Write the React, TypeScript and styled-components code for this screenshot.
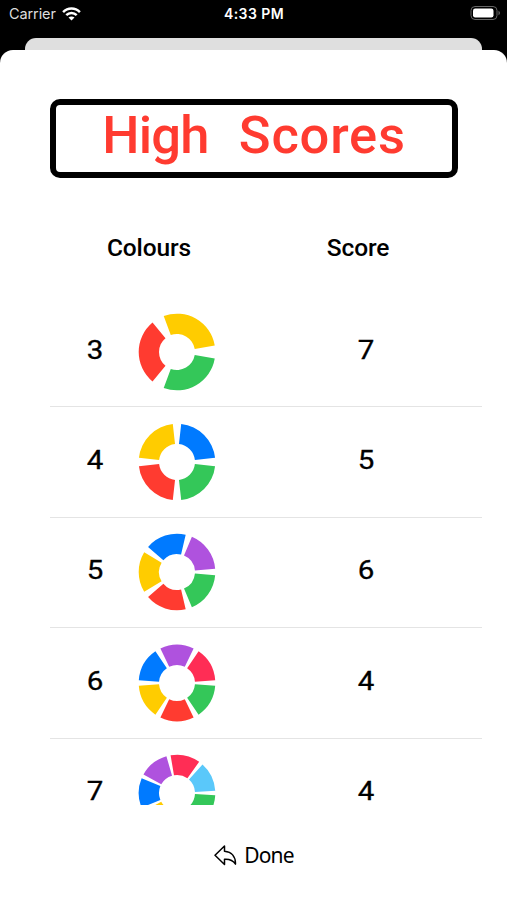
import React from "react";
import styled, { createGlobalStyle } from "styled-components";

const Global = createGlobalStyle`
  *, *::before, *::after { box-sizing: border-box; }
  body { margin: 0; background: #000; overflow: hidden; }
`;

const Screen = styled.div`
  width: 507px;
  height: 900px;
  display: flex;
  flex-direction: column;
  background: #000;
  overflow: hidden;
  font-family: Roboto, sans-serif;
  color: #000;
`;

const StatusBar = styled.header`
  height: 38px;
  flex: none;
  display: grid;
  grid-template-columns: 1fr auto 1fr;
  align-items: start;
  padding: 5px 6px 0 9px;
  color: #fff;
  font: 400 14.5px/18px Inter, sans-serif;
`;

const Carrier = styled.div`
  display: flex;
  align-items: center;
  gap: 6px;
  color: #ddd;
  letter-spacing: -0.1px;
`;

const Clock = styled.div`
  font-weight: 600;
  font-size: 14px;
  letter-spacing: 0.45px;
  padding-right: 2px;
`;

const BatteryIcon = styled.svg`
  justify-self: end;
`;

const BackCard = styled.div`
  height: 12px;
  flex: none;
  margin: 0 25px;
  border-radius: 11px 11px 0 0;
  background: #dfdfdf;
`;

const Sheet = styled.main`
  flex: 1;
  min-height: 0;
  display: flex;
  flex-direction: column;
  background: #fff;
  border-radius: 13px 13px 0 0;
  padding: 49px 0 0;
`;

const Title = styled.h1`
  width: 408px;
  height: 79px;
  flex: none;
  margin: 0 0 0 50px;
  border: 6px solid #000;
  border-radius: 10px;
  display: flex;
  justify-content: center;
  gap: 18px;
  color: #ff3b30;
  font-size: 52.5px;
  line-height: 60px;
  font-weight: 500;
`;

const TitleWord = styled.span<{ $tracking: number }>`
  letter-spacing: ${(p) => p.$tracking}px;
  white-space: pre;
`;

const Columns = styled.div`
  display: grid;
  grid-template-columns: 198px 1fr;
  margin: 0 50px 0 50px;
  padding-top: 52px;
  flex: none;
  height: 119px;
`;

const ColumnName = styled.div<{ $inset?: number }>`
  font-size: 24.5px;
  line-height: 35px;
  font-weight: 500;
  text-align: center;
  letter-spacing: -0.1px;
  padding-left: ${(p) => p.$inset ?? 0}px;
`;

const List = styled.ul`
  list-style: none;
  margin: 0 25px 0 50px;
  padding: 0;
  height: 508px;
  flex: none;
  overflow: hidden;
`;

const Row = styled.li`
  height: 110.4px;
  display: grid;
  grid-template-columns: 90px 78px 198px;
  align-items: center;
  border-bottom: 1px solid #e4e4e4;
`;

const Digit = styled.span`
  justify-self: center;
  font-size: 25px;
  line-height: 22px;
  font-weight: 400;
  -webkit-text-stroke: 0.3px #000;
  transform: scaleX(1.18);
  margin-top: -2px;
`;

const ScoreDigit = styled(Digit)`
  margin-left: 98px;
  justify-self: start;
  width: 100px;
  text-align: center;
`;

const WheelDrawing = styled.svg`
  display: block;
  margin-left: -3px;
`;

const Footer = styled.footer`
  flex: 1;
  display: flex;
  justify-content: center;
  padding: 36px 0 0 1px;
`;

const DoneButton = styled.button`
  display: flex;
  align-items: center;
  gap: 7px;
  height: 28px;
  border: 0;
  padding: 0;
  background: none;
  color: #000;
  font: 400 21px/28px "Noto Sans", sans-serif;
  letter-spacing: -0.8px;
`;

const palette = ["#34c759", "#ff3b30", "#ffcc00", "#007aff", "#af52de", "#ff2d55", "#5ac8fa"];

const scores = [
  { colours: 3, score: 7, gap: 9.7 },
  { colours: 4, score: 5, gap: 6.3 },
  { colours: 5, score: 6, gap: 4.9 },
  { colours: 6, score: 4, gap: 4.3 },
  { colours: 7, score: 4, gap: 3.2 },
];

const OUTER = 38.3;
const INNER = 18;

function point(radius: number, degrees: number) {
  const a = (degrees * Math.PI) / 180;
  return `${(40 + radius * Math.cos(a)).toFixed(2)} ${(40 + radius * Math.sin(a)).toFixed(2)}`;
}

function Wheel({ count, gap }: { count: number; gap: number }) {
  const span = 360 / count;
  return (
    <WheelDrawing width="80" height="80" viewBox="0 0 80 80">
      {palette.slice(0, count).map((colour, i) => {
        const from = i * span + gap;
        const to = (i + 1) * span - gap;
        return (
          <path
            key={colour}
            fill={colour}
            d={`M${point(OUTER, from)} A${OUTER} ${OUTER} 0 0 1 ${point(OUTER, to)} L${point(INNER, to)} A${INNER} ${INNER} 0 0 0 ${point(INNER, from)} Z`}
          />
        );
      })}
    </WheelDrawing>
  );
}

export default function App() {
  return (
    <>
      <Global />
      <Screen>
        <StatusBar>
          <Carrier>
            Carrier
            <svg width="19" height="14" viewBox="0 0 19 14" fill="none" stroke="#fff" strokeWidth="2.5">
              <path d="M1.1 5.1C5.8.4 13.2.4 17.9 5.1" />
              <path d="M4.3 8.2c2.9-2.9 7.5-2.9 10.4 0" />
              <path d="M6.5 10.6c1.7-1.6 4.3-1.6 6 0l-3 3z" fill="#fff" stroke="none" />
            </svg>
          </Carrier>
          <Clock>4:33 PM</Clock>
          <BatteryIcon width="31" height="16" viewBox="0 0 31 16">
            <rect x="1" y="1.5" width="26" height="13" rx="4" fill="none" stroke="#666" />
            <rect x="3" y="3.5" width="20.5" height="9" rx="2.2" fill="#fff" />
            <path d="M28.5 5.8c2 .8 2 3.6 0 4.4z" fill="#666" />
          </BatteryIcon>
        </StatusBar>
        <BackCard />
        <Sheet>
          <Title>
            <TitleWord $tracking={-0.8}>High </TitleWord>
            <TitleWord $tracking={0.8}>Scores</TitleWord>
          </Title>
          <Columns>
            <ColumnName>Colours</ColumnName>
            <ColumnName $inset={11}>Score</ColumnName>
          </Columns>
          <List>
            {scores.map((s) => (
              <Row key={s.colours}>
                <Digit>{s.colours}</Digit>
                <Wheel count={s.colours} gap={s.gap} />
                <ScoreDigit>{s.score}</ScoreDigit>
              </Row>
            ))}
          </List>
          <Footer>
            <DoneButton>
              <svg width="23" height="21" viewBox="0 0 23 21" fill="none" stroke="#000" strokeWidth="1.5" strokeLinejoin="round">
                <path d="M10.5 1 1 10.3l9.5 9.2v-5.2c5.5-.4 8.5 1 11 4.8.1-7-3.5-12.4-11-12.8z" />
              </svg>
              Done
            </DoneButton>
          </Footer>
        </Sheet>
      </Screen>
    </>
  );
}
